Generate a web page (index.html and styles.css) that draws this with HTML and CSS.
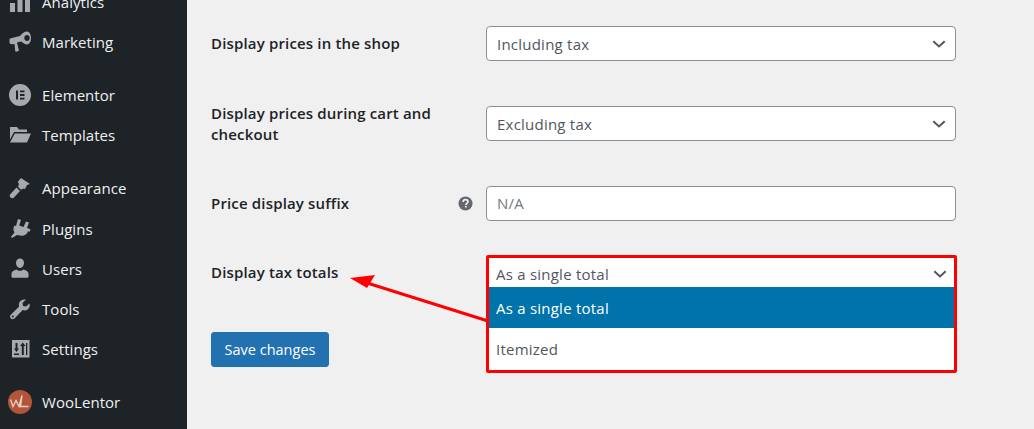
FILE: index.html
```html
<!DOCTYPE html>
<html lang="en">
<head>
<meta charset="utf-8">
<title>Tax settings</title>
<link rel="stylesheet" href="styles.css">
</head>
<body>
<div class="page">
  <nav class="sidebar">
    <ul class="menu">
      <li class="item"><svg class="icon" viewBox="0 0 22 22"><path d="M1 12h5v9H1zM8.500 1h5v20h-5zM16 6h5v15h-5z"/></svg>Analytics</li>
      <li class="item"><svg class="icon" viewBox="0 0 22 22"><path fill-rule="evenodd" d="M.5 9C.5 8 1 7.500 2 7.300L11 5c2-2.500 4.500-4.500 7-4.500 2.500 0 4 3 4 6.500s-1.500 6.500-4 6.500c-2 0-4-1.500-6-3l-4 1 1.800 7.500c.2.600-.1 1-.6 1.100l-2 .6c-.5.100-.9-.1-1-.7L5.500 13l-3 .2c-1.200 0-2-.8-2-2zM18 4c-1.500 0-2.700 1.300-2.700 3s1.200 3 2.700 3 2.700-1.300 2.700-3-1.200-3-2.700-3z"/></svg>Marketing</li>
      <li class="item sep"><svg class="icon" viewBox="0 0 22 22"><path d="M11 0a11 11 0 1 0 0 22 11 11 0 0 0 0-22zM7 6.500h2v9H7zm4 0h4.500v1.800H11zm0 3.600h4.500v1.800H11zm0 3.600h4.500v1.800H11z" fill-rule="evenodd"/></svg>Elementor</li>
      <li class="item"><svg class="icon" viewBox="0 0 22 22"><path d="M1 3h7l2 2.500h8V8H5L1 15.500zM5.800 9.500H22l-4 9H1z"/></svg>Templates</li>
      <li class="item sep"><svg class="icon" viewBox="0 0 22 22"><path d="M12 1l9 6-3 1-2 4-1.500-.5-2.500 1.200-3-3L10 7 8.700 5zM7.500 10.500l3.500 3.500-6 6.500c-1 1-2.500 1-3.500 0s-1-2.500 0-3.500z"/></svg>Appearance</li>
      <li class="item nudge"><svg class="icon" viewBox="0 0 22 22"><path d="M9 1l3 1-1.800 5.500 4.300 1.400L17 3.500l3 1-2 5.500 3.500 1.200-.8 2.500-1.700-.5c-1 3.400-4.500 5.200-7.800 4.300L8 17l-5 3-1-1.300 3.500-4.200C4 12 4.200 9.500 5.500 7.500L7 8z"/></svg>Plugins</li>
      <li class="item"><svg class="icon" viewBox="0 0 22 22"><path d="M11 .5c2.400 0 4 1.800 4 4.300S13.400 10 11 10 7 7.300 7 4.800 8.600.5 11 .5zM2.500 15.500c0-2 2.500-3.300 5-4 .9.900 2.200 1.300 3.500 1.300s2.600-.4 3.500-1.300c2.500.7 5 2 5 4v3c0 .8-.6 1.300-1.300 1.300H3.800c-.7 0-1.300-.5-1.300-1.300z"/></svg>Users</li>
      <li class="item"><svg class="icon" viewBox="0 0 22 22"><path d="M20.500 5.500c.8 2.500-.2 5-2.200 6.200-1.500.9-3.200 1-4.600.3L5.500 20.500c-1 1-2.700 1-3.700 0s-1-2.700 0-3.700l8.400-8.300c-.6-1.500-.5-3.200.4-4.600C11.800 2 14.300 1 16.800 1.700L13.500 5l.5 3 3 .5zM3.800 17.500a1 1 0 1 0 0 2 1 1 0 0 0 0-2z" fill-rule="evenodd"/></svg>Tools</li>
      <li class="item"><svg class="icon" viewBox="0 0 22 22"><path d="M3 2h17.500v17.500H3zM6.500 5v5.500H5L7.500 14 10 10.500H8.500V5zm-1.500 10.500V17h5v-1.500zM13.800 4.500 11 8h1.800v9h2V8h1.800zm3.200.5v12h1.300V5z" fill-rule="evenodd"/></svg>Settings</li>
      <li class="item sep"><svg class="logo" viewBox="0 0 24 24"><circle cx="12" cy="12" r="12" fill="#b4543a"/><path d="M2.500 9.500l2.500 7 3-6 3 6 3-11M14 5.500l-1.500 11h8" fill="none" stroke="#e8d3c8" stroke-width="1.300"/></svg>WooLentor</li>
    </ul>
  </nav>
  <main class="content">
    <form class="form">
      <div class="row">
        <div class="label">Display prices in the shop</div>
        <div class="field select"><span>Including tax</span><svg class="chev" viewBox="0 0 14 8"><path d="M1.300 1.300 7 6.500l5.700-5.200"/></svg></div>
      </div>
      <div class="row">
        <div class="label">Display prices during cart and checkout</div>
        <div class="field select"><span>Excluding tax</span><svg class="chev" viewBox="0 0 14 8"><path d="M1.300 1.300 7 6.500l5.700-5.200"/></svg></div>
      </div>
      <div class="row row-suffix">
        <div class="label label-help">Price display suffix
          <svg class="help" viewBox="0 0 16 16"><circle cx="8" cy="8" r="7.500" fill="#646970"/><path d="M5.500 6.300c0-1.500 1.100-2.400 2.600-2.400s2.500.9 2.500 2.100c0 1.900-2.100 1.800-2.100 3.500" fill="none" stroke="#f0f0f1" stroke-width="1.700"/><rect x="7.500" y="10.500" width="1.800" height="1.800" fill="#f0f0f1"/></svg>
        </div>
        <input class="field input" type="text" placeholder="N/A">
      </div>
      <div class="row row-open">
        <div class="label label-open">Display tax totals</div>
        <div class="dropdown">
          <div class="current"><span>As a single total</span><svg class="chev" viewBox="0 0 14 8"><path d="M1.300 1.300 7 6.500l5.700-5.200"/></svg></div>
          <div class="option active">As a single total</div>
          <div class="option">Itemized</div>
        </div>
      </div>
      <button class="save" type="button">Save changes</button>
    </form>
    <svg class="arrow" viewBox="0 0 150 60" width="150" height="60"><path d="M146 48.500 14 7" fill="none" stroke="#f00" stroke-width="3"/><path d="M0 3 25 0 17 13z" fill="#f00"/></svg>
  </main>
</div>
</body>
</html>
```
FILE: styles.css
```css
* { box-sizing: border-box; }
html, body { margin: 0; height: 100%; overflow: hidden; }
body { font-family: "Open Sans", "Noto Sans", sans-serif; font-size: 14px; background: #f0f0f1; }
.page { display: flex; height: 429px; overflow: hidden; }

.sidebar { width: 187px; flex: none; background: #1d2327; color: #f0f0f1; overflow: hidden; }
.menu { list-style: none; margin: -18px 0 0; padding: 0; }
.item { display: flex; align-items: center; height: 40px; padding-left: 9px; font-size: 15px; letter-spacing: .05px; }
.item.sep { margin-top: 13px; }
.item.nudge { margin-top: 1px; }
.icon { width: 22px; height: 22px; margin-right: 11px; fill: #a7aaad; flex: none; }
.logo { width: 24px; height: 24px; margin-left: -1px; margin-right: 10px; flex: none; }

.content { flex: 1; position: relative; padding: 26px 0 0 24px; }
.form { width: 745px; }
.row { display: grid; grid-template-columns: 275px 470px; grid-template-rows: 35px; align-items: center; height: 35px; margin-bottom: 45px; }
.row-suffix { margin-bottom: 35px; }
.label { font-weight: 600; font-size: 15px; letter-spacing: .16px; line-height: 21px; color: #1d2327; padding-right: 40px; }
.label-help { position: relative; padding-bottom: 1px; }
.help { position: absolute; right: 13px; top: 3px; width: 15px; height: 15px; }
.field { height: 35px; border: 1px solid #8c8f94; border-radius: 4px; background: #fff; color: #50575e; font: inherit; font-size: 15px; letter-spacing: .23px; padding: 0 9px 0 10px; width: 470px; }
.select { display: flex; align-items: center; justify-content: space-between; }
.input { padding-bottom: 1px; }
.input::placeholder { color: #757a80; opacity: 1; }
.chev { width: 14px; height: 8px; fill: none; stroke: #50575e; stroke-width: 2; flex: none; }

.row-open { margin-bottom: 41px; }
.label-open { align-self: start; padding-top: 6px; }
.dropdown { width: 471px; height: 118px; align-self: start; margin-top: -1px; position: relative; background: #fff; border: 3px solid #f00; border-radius: 2px; color: #50575e; font-size: 15px; letter-spacing: .23px; z-index: 1; }
.current { display: flex; align-items: center; justify-content: space-between; height: 29px; padding: 2px 7px 0 7px; }
.option { height: 41px; padding: 0 0 0 7px; display: flex; align-items: center; }
.option.active { background: #0073aa; color: #fff; }

.save { display: block; width: 118px; height: 35px; border: 1px solid #2271b1; border-radius: 3px; background: #2271b1; color: #fff; font: inherit; font-size: 14.500px; padding: 0; }

.arrow { position: absolute; left: 163px; top: 275px; }
```
